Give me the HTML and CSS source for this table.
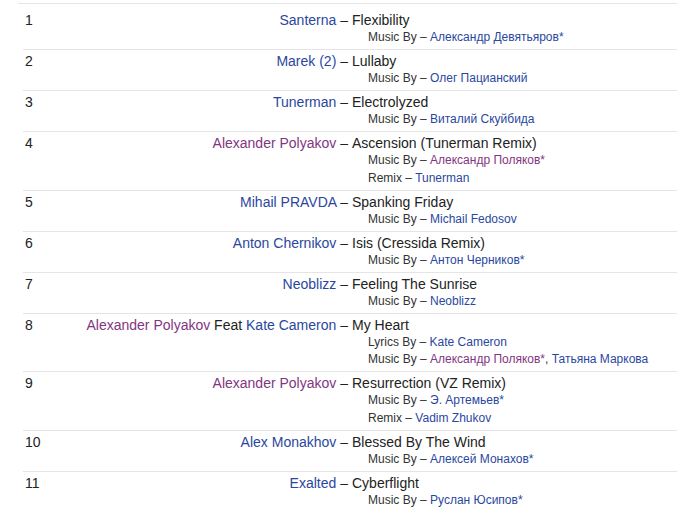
FILE: index.html
```html
<!DOCTYPE html>
<html>
<head>
<meta charset="utf-8">
<link rel="stylesheet" href="styles.css">
</head>
<body>
<div class="topline"></div>
<table class="tracklist">
<colgroup><col class="c-pos"><col class="c-artist"><col class="c-title"></colgroup>
<tbody>
<tr class="first">
<td class="pos">1</td>
<td class="artist"><a class="lnk">Santerna</a> –</td>
<td class="title"><span class="name">Flexibility</span>
<div class="credit">Music By – <a class="lnk">Александр Девятьяров*</a></div></td>
</tr>
<tr>
<td class="pos">2</td>
<td class="artist"><a class="lnk">Marek (2)</a> –</td>
<td class="title"><span class="name">Lullaby</span>
<div class="credit">Music By – <a class="lnk">Олег Пацианский</a></div></td>
</tr>
<tr>
<td class="pos">3</td>
<td class="artist"><a class="lnk">Tunerman</a> –</td>
<td class="title"><span class="name">Electrolyzed</span>
<div class="credit">Music By – <a class="lnk">Виталий Скуйбида</a></div></td>
</tr>
<tr>
<td class="pos">4</td>
<td class="artist"><a class="lnk visited">Alexander Polyakov</a> –</td>
<td class="title"><span class="name">Ascension (Tunerman Remix)</span>
<div class="credit">Music By – <a class="lnk visited">Александр Поляков*</a></div>
<div class="credit">Remix – <a class="lnk">Tunerman</a></div></td>
</tr>
<tr>
<td class="pos">5</td>
<td class="artist"><a class="lnk">Mihail PRAVDA</a> –</td>
<td class="title"><span class="name">Spanking Friday</span>
<div class="credit">Music By – <a class="lnk">Michail Fedosov</a></div></td>
</tr>
<tr>
<td class="pos">6</td>
<td class="artist"><a class="lnk">Anton Chernikov</a> –</td>
<td class="title"><span class="name">Isis (Cressida Remix)</span>
<div class="credit">Music By – <a class="lnk">Антон Черников*</a></div></td>
</tr>
<tr>
<td class="pos">7</td>
<td class="artist"><a class="lnk">Neoblizz</a> –</td>
<td class="title"><span class="name">Feeling The Sunrise</span>
<div class="credit">Music By – <a class="lnk">Neoblizz</a></div></td>
</tr>
<tr>
<td class="pos">8</td>
<td class="artist"><a class="lnk visited">Alexander Polyakov</a> Feat <a class="lnk">Kate Cameron</a> –</td>
<td class="title"><span class="name">My Heart</span>
<div class="credit">Lyrics By – <a class="lnk">Kate Cameron</a></div>
<div class="credit">Music By – <a class="lnk visited">Александр Поляков*</a>, <a class="lnk">Татьяна Маркова</a></div></td>
</tr>
<tr>
<td class="pos">9</td>
<td class="artist"><a class="lnk visited">Alexander Polyakov</a> –</td>
<td class="title"><span class="name">Resurrection (VZ Remix)</span>
<div class="credit">Music By – <a class="lnk">Э. Артемьев*</a></div>
<div class="credit">Remix – <a class="lnk">Vadim Zhukov</a></div></td>
</tr>
<tr>
<td class="pos">10</td>
<td class="artist"><a class="lnk">Alex Monakhov</a> –</td>
<td class="title"><span class="name">Blessed By The Wind</span>
<div class="credit">Music By – <a class="lnk">Алексей Монахов*</a></div></td>
</tr>
<tr>
<td class="pos">11</td>
<td class="artist"><a class="lnk">Exalted</a> –</td>
<td class="title"><span class="name">Cyberflight</span>
<div class="credit">Music By – <a class="lnk">Руслан Юсипов*</a></div></td>
</tr>
</tbody>
</table>
</body>
</html>
```
FILE: styles.css
```css
html, body {
  margin: 0;
  padding: 0;
  background: #fff;
}
body {
  font-family: "Liberation Sans", Arial, sans-serif;
  font-size: 14px;
  color: #222;
  overflow: hidden;
}
.topline {
  margin: 3px 0 0 18px;
  border-top: 1px solid #e5e5e5;
}
.tracklist {
  margin-left: 23px;
  width: 654px;
  border-collapse: collapse;
  table-layout: fixed;
}
.c-pos { width: 40px; }
.c-artist { width: 285px; }
.c-title { width: 329px; }
.tracklist td {
  vertical-align: top;
  padding: 2px 0 2.5px 0;
  line-height: 18px;
  border-top: 1px solid #e5e5e5;
}
.tracklist tr.first td {
  border-top: none;
  padding-top: 7px;
}
.pos {
  padding-left: 2px !important;
  color: #222;
}
.artist {
  text-align: right;
  white-space: nowrap;
  color: #222;
}
.tracklist td.title {
  padding-left: 4px;
}
.lnk {
  color: #2a47a0;
  text-decoration: none;
}
.lnk.visited {
  color: #83357f;
}
.credit {
  font-size: 12px;
  line-height: 17.5px;
  padding-left: 16px;
  color: #333;
  white-space: nowrap;
}
```
